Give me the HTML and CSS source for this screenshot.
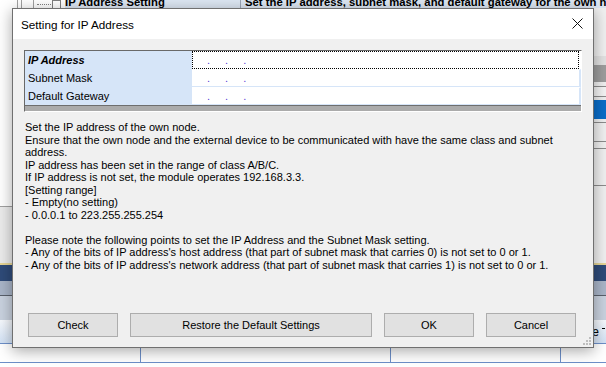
FILE: index.html
```html
<!DOCTYPE html>
<html lang="en">
<head>
    <meta charset="UTF-8">
    <title>Setting for IP Address</title>
    <link rel="stylesheet" href="styles.css">
</head>
<body>

    <div class="app">
        <div class="tree-row">
            <div class="tree-lines">
                <span class="vline"></span>
                <span class="vline"></span>
                <span class="vline"></span>
                <span class="branch"></span>
                <span class="minus"></span>
            </div>
            <div class="tree-name">IP Address Setting</div>
            <div class="tree-desc">Set the IP address, subnet mask, and default gateway for the own no</div>
        </div>

        <div class="upper">
            <div class="tree-pane">
                <div class="tree-space"></div>
                <div class="tree-foot"></div>
            </div>
            <div class="side-pane">
                <div class="side-a"></div>
                <div class="side-b"></div>
                <div class="side-c"></div>
                <div class="side-d"></div>
                <div class="side-sel"></div>
                <div class="side-e"></div>
                <div class="side-f"></div>
                <div class="side-g"></div>
            </div>
        </div>

        <div class="band-beige"></div>
        <div class="band-navy"></div>
        <div class="band-steel"></div>
        <div class="band-pale"></div>
        <div class="list-head">
            <span class="head-text">e</span>
            <span class="head-mark"></span>
        </div>
        <div class="list-row">
            <span class="cell c1"></span>
            <span class="cell c2"></span>
            <span class="cell c3"></span>
            <span class="cell c4"></span>
        </div>
    </div>

    <div class="dialog">
        <div class="title-bar">
            <span class="title">Setting for IP Address</span>
            <svg class="close" width="11" height="11" viewBox="0 0 11 11">
                <path d="M0.5 0.5 L10.5 10.5 M10.5 0.5 L0.5 10.5" stroke="#111" stroke-width="1" fill="none"/>
            </svg>
        </div>

        <div class="dialog-body">
            <div class="prop-grid">
                <div class="prop-row">
                    <div class="prop-name bold">IP Address</div>
                    <div class="prop-value focused"><span>.</span><span>.</span><span>.</span></div>
                </div>
                <div class="prop-row">
                    <div class="prop-name">Subnet Mask</div>
                    <div class="prop-value"><span>.</span><span>.</span><span>.</span></div>
                </div>
                <div class="prop-row">
                    <div class="prop-name">Default Gateway</div>
                    <div class="prop-value"><span>.</span><span>.</span><span>.</span></div>
                </div>
                <div class="grid-bar"></div>
            </div>

            <div class="help">
                <p>Set the IP address of the own node.</p>
                <p>Ensure that the own node and the external device to be communicated with have the same class and subnet address.</p>
                <p>IP address has been set in the range of class A/B/C.</p>
                <p>If IP address is not set, the module operates 192.168.3.3.</p>
                <p>[Setting range]</p>
                <p>- Empty(no setting)</p>
                <p>- 0.0.0.1 to 223.255.255.254</p>
                <p>&nbsp;</p>
                <p>Please note the following points to set the IP Address and the Subnet Mask setting.</p>
                <p>- Any of the bits of IP address's host address (that part of subnet mask that carries 0) is not set to 0 or 1.</p>
                <p>- Any of the bits of IP address's network address (that part of subnet mask that carries 1) is not set to 0 or 1.</p>
            </div>

            <div class="buttons">
                <button class="btn btn-small">Check</button>
                <button class="btn btn-wide">Restore the Default Settings</button>
                <button class="btn btn-small">OK</button>
                <button class="btn btn-small">Cancel</button>
            </div>
        </div>

        <svg class="grip" width="9" height="9" viewBox="0 0 9 9">
            <rect x="6" y="0" width="2" height="2" fill="#bdbdbd"/>
            <rect x="3" y="3" width="2" height="2" fill="#bdbdbd"/>
            <rect x="6" y="3" width="2" height="2" fill="#bdbdbd"/>
            <rect x="0" y="6" width="2" height="2" fill="#bdbdbd"/>
            <rect x="3" y="6" width="2" height="2" fill="#bdbdbd"/>
            <rect x="6" y="6" width="2" height="2" fill="#bdbdbd"/>
        </svg>
    </div>

</body>
</html>
```

FILE: styles.css
```css
body {
    margin: 0;
    font-family: "Liberation Sans", Arial, sans-serif;
    font-size: 11px;
    color: #000;
    background-color: #fff;
    overflow: hidden;
}

/* application window behind the dialog */
.app {
    width: 606px;
    height: 367px;
    display: flex;
    flex-direction: column;
    overflow: hidden;
}
.tree-row {
    height: 8px;
    display: flex;
    align-items: flex-end;
    overflow: hidden;
    flex-shrink: 0;
}
.tree-lines {
    width: 65px;
    height: 8px;
    display: flex;
    align-items: stretch;
    background-color: #fff;
    flex-shrink: 0;
}
.vline {
    width: 1px;
    background-color: #a0a0a0;
    margin-left: 3px;
}
.vline:first-child { margin-left: 17px; }
.vline:nth-child(3) { margin-left: 11px; }
.branch {
    width: 14px;
    height: 0;
    align-self: center;
    border-top: 1px dotted #808080;
    margin-left: 3px;
}
.minus {
    width: 7px;
    height: 8px;
    border: 1px solid #7f7f7f;
    border-bottom: none;
    background-color: #fff;
    margin-left: 1px;
}
.tree-name, .tree-desc {
    font-size: 11.3px;
    font-weight: bold;
    line-height: 12px;
    height: 12px;
    white-space: nowrap;
    background-color: #dde7f3;
}
.tree-name {
    width: 175px;
    flex-shrink: 0;
    border-right: 1px solid #9aa5b5;
}
.tree-desc {
    flex: 1;
    padding-left: 4px;
}

.upper {
    height: 255px;
    display: flex;
    flex-shrink: 0;
}
.tree-pane {
    flex: 1;
    display: flex;
    flex-direction: column;
}
.tree-space {
    height: 198px;
    background-color: #fff;
    border-bottom: 1px solid #a0a0a0;
}
.tree-foot {
    flex: 1;
    background-color: #ebebeb;
}
.side-pane {
    width: 40px;
    display: flex;
    flex-direction: column;
    background-color: #f0f0f0;
}
.side-a { height: 48px; background-color: #f0f0f0; }
.side-b { height: 9px; background-color: #e2e2e2; }
.side-c { height: 17px; background-color: #9d9d9d; }
.side-d {
    height: 9px;
    border-top: 1px solid #8c8c8c;
    border-bottom: 1px solid #8c8c8c;
    margin-top: 4px;
    background-color: #f4f4f4;
}
.side-sel { height: 19px; margin-top: 3px; background-color: #0a6dc8; }
.side-e {
    height: 18px;
    border-top: 1px solid #8c8c8c;
    border-bottom: 1px solid #8c8c8c;
    margin-top: 3px;
}
.side-f {
    height: 6px;
    border-bottom: 1px solid #8c8c8c;
}
.side-g {
    height: 36px;
    border-bottom: 1px solid #8c8c8c;
}

.band-beige { height: 2px; background-color: #e6d595; flex-shrink: 0; }
.band-navy { height: 16px; background-color: #2f4b79; flex-shrink: 0; }
.band-steel { height: 14px; background-color: #a9b5c8; border-bottom: 1px solid #59606b; flex-shrink: 0; }
.band-pale { height: 24px; background-color: #c9d2df; flex-shrink: 0; }
.list-head {
    height: 23px;
    background: linear-gradient(#f6f9fd, #d3e2f5);
    border-bottom: 1px solid #6d8fc8;
    display: flex;
    justify-content: flex-end;
    align-items: center;
    gap: 3px;
    padding-right: 1px;
    flex-shrink: 0;
}
.head-text {
    font-size: 12px;
}
.head-mark {
    width: 3px;
    height: 1px;
    background-color: #000;
    margin-bottom: 6px;
}
.list-row {
    height: 18px;
    display: flex;
    border-bottom: 1px solid #6d8fc8;
    flex-shrink: 0;
}
.cell {
    border-right: 1px solid #6d8fc8;
}
.c1 { width: 140px; }
.c2 { width: 249px; }
.c3 { width: 169px; }
.c4 { flex: 1; border-right: none; }

/* dialog */
.dialog {
    position: absolute;
    left: 12px;
    top: 8px;
    width: 580px;
    height: 338px;
    border: 1px solid #707070;
    background-color: #f0f0f0;
    box-shadow: 0 3px 14px rgba(0, 0, 0, 0.35);
    display: flex;
    flex-direction: column;
}
.title-bar {
    height: 30px;
    background-color: #fff;
    display: flex;
    align-items: center;
    justify-content: space-between;
    padding: 0 10px 0 8px;
    flex-shrink: 0;
}
.title {
    font-size: 11.7px;
    color: #000;
}
.close {
    display: block;
    margin-top: -1px;
}
.dialog-body {
    flex: 1;
    display: flex;
    flex-direction: column;
    padding: 11px 11px 10px 11px;
}

.prop-grid {
    border-top: 1px solid #696969;
    border-left: 1px solid #696969;
    border-right: 1px solid #fff;
    border-bottom: 1px solid #fff;
    background-color: #fff;
}
.prop-row {
    height: 18px;
    display: flex;
}
.prop-name {
    width: 164px;
    padding-left: 3px;
    background-color: #d6e5f8;
    line-height: 18px;
    white-space: nowrap;
}
.prop-name.bold {
    font-weight: bold;
    font-style: italic;
}
.prop-value {
    flex: 1;
    display: flex;
    gap: 15px;
    padding-left: 15px;
    line-height: 16px;
    color: #5a3fd6;
    border-bottom: 1px solid #d6e5f8;
    border-right: 2px solid #d6e5f8;
    border-top: 1px solid transparent;
}
.prop-value.focused {
    border: 1px dotted #000;
    margin-right: 2px;
    padding-left: 14px;
}
.grid-bar {
    height: 5px;
    border-top: 1px solid #6e6e6e;
    background-color: #ababab;
}

.help {
    margin-top: 9px;
    padding-left: 1px;
    line-height: 12.5px;
}
.help p {
    margin: 0;
}

.buttons {
    margin-top: auto;
    display: flex;
    gap: 12px;
    padding-left: 4px;
}
.btn {
    height: 24px;
    border: 1px solid #adadad;
    background-color: #e1e1e1;
    font-family: "Liberation Sans", Arial, sans-serif;
    font-size: 11px;
    color: #000;
    padding: 0;
}
.btn-small { width: 90px; }
.btn-wide { width: 242px; }

.grip {
    position: absolute;
    right: 1px;
    bottom: 1px;
}
```
